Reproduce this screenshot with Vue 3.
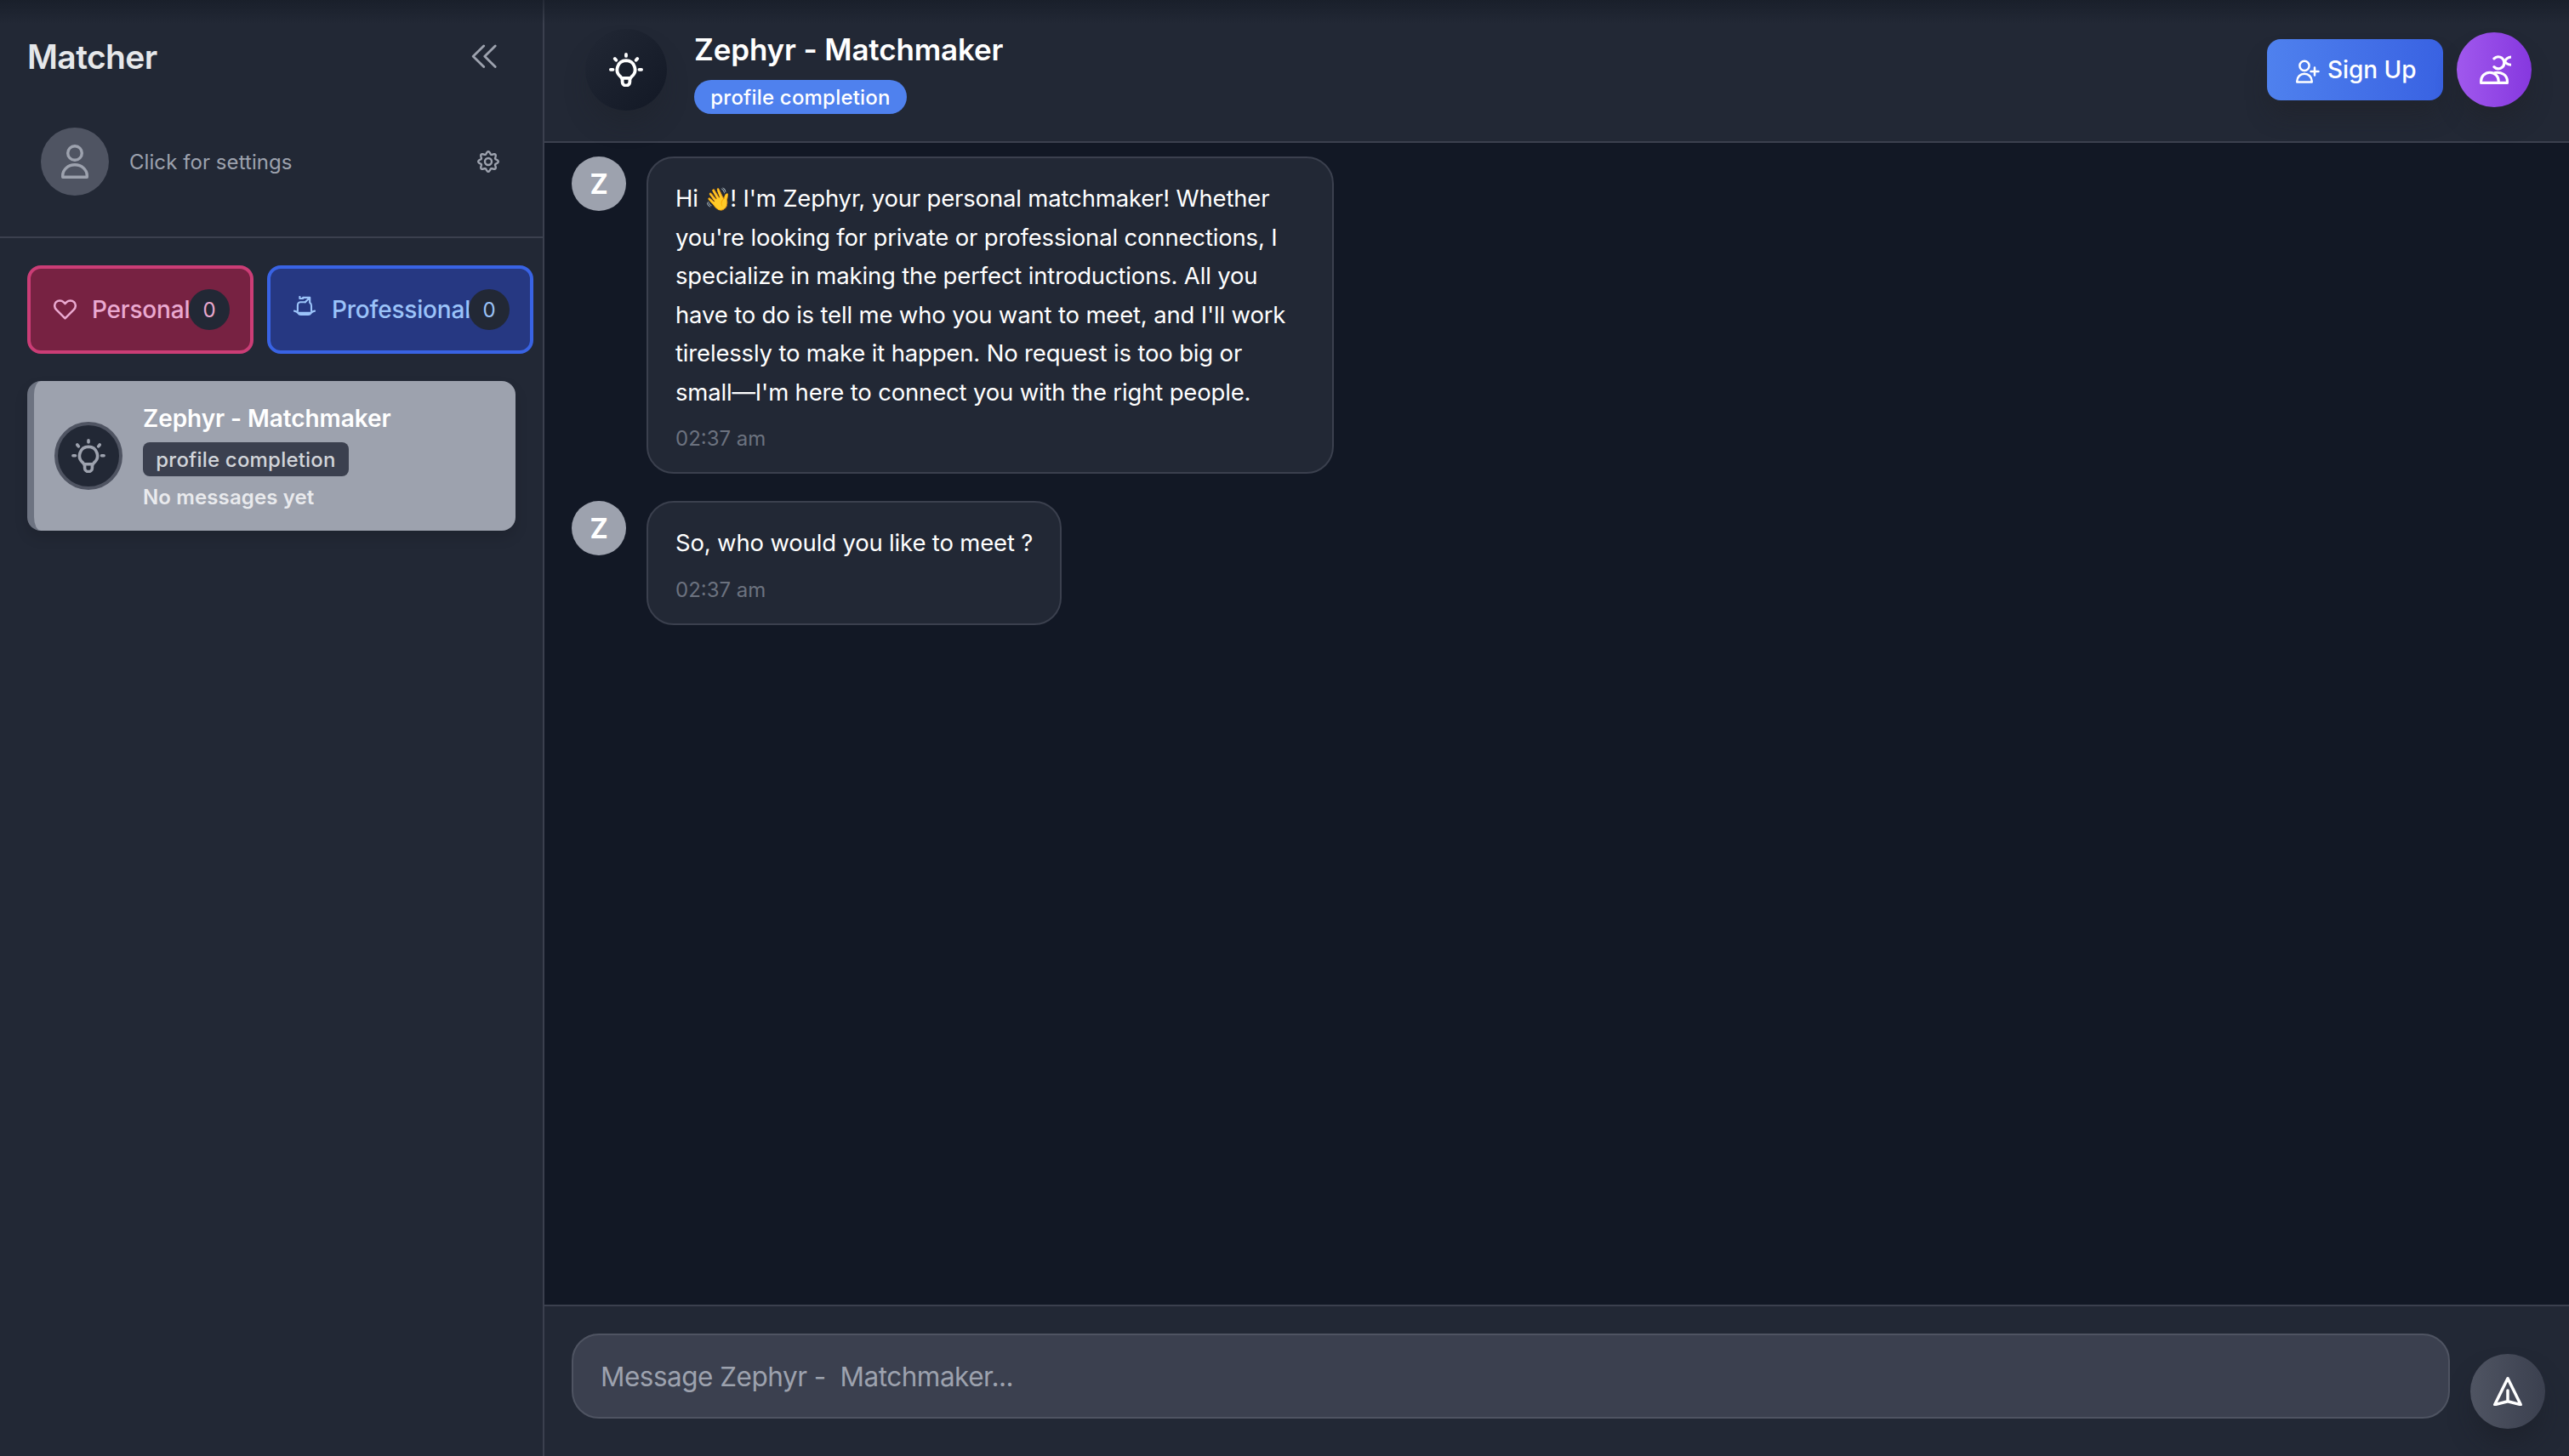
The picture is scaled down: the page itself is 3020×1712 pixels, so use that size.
<template>
  <div class="app">
    <aside class="sidebar">
      <div class="sidebar-top">
        <div class="brand-row">
          <h1 class="brand">Matcher</h1>
          <button class="collapse-btn" aria-label="Collapse">
            <svg width="32" height="28" viewBox="0 0 32 28" class="stroke-icon">
              <path d="M14.7 2 2.2 14.2l12.5 12.2M28.2 2 15.8 14.2l12.4 12.2" stroke-width="2.8" />
            </svg>
          </button>
        </div>
        <div class="account">
          <div class="account-avatar">
            <svg width="32" height="40" viewBox="0 0 32 40" class="stroke-icon">
              <circle cx="16" cy="10" r="8.3" stroke-width="3.4" />
              <path d="M1.7 36.5v1.8h28.6v-1.8a14.3 12.8 0 0 0-28.6 0z" stroke-width="3.4" />
            </svg>
          </div>
          <span class="account-label">Click for settings</span>
          <svg width="28" height="28" viewBox="-14 -14 28 28" class="stroke-icon gear">
            <path :d="gearPath" stroke-width="2.4" />
            <circle r="4" stroke-width="2.4" />
          </svg>
        </div>
      </div>

      <div class="tabs">
        <button v-for="tab in tabs" :key="tab.id" :class="['tab', `tab-${tab.id}`]">
          <span class="tab-icon">
            <svg v-if="tab.id === 'personal'" width="27" height="24" viewBox="0 0 27 24" class="stroke-icon heart">
              <path d="M13.5 22.4 3 11.8a6 6 0 0 1 8.6-8.6l1.9 1.9 1.9-1.9a6 6 0 0 1 8.6 8.6z" stroke-width="2.5" />
            </svg>
            <svg v-else width="26" height="24" viewBox="0 0 26 24" class="stroke-icon case">
              <path d="M4.9 18v-6.500C4.900 8.500 6 7.400 8 7.300h6M19.300 8c1.300.6 1.700 1.600 1.700 3.500V18" stroke-width="2.1" />
              <path d="M1 17.600c3 .3 3.500 1 4.500 2.600.8 1.300 1.500 1.700 3 1.700h9c1.500 0 2.200-.4 3-1.700 1-1.600 1.500-2.300 4.500-2.600M6 19.800h14" stroke-width="2.2" />
              <path d="M7.400 1v2h3.800V1.800h8V7.500M18.800 2.300l-5 5" stroke-width="2.2" />
            </svg>
          </span>
          <span class="tab-label">{{ tab.label }}</span>
          <span class="tab-count">{{ tab.count }}</span>
        </button>
      </div>

      <div class="chat-card">
        <div class="chat-avatar">
          <svg width="40" height="40" viewBox="0 0 40 40" class="stroke-icon">
            <path :d="bulbPath" stroke-width="3.6" />
          </svg>
        </div>
        <div class="chat-info">
          <div class="chat-name">Zephyr - Matchmaker</div>
          <div class="chat-tag">profile completion</div>
          <div class="chat-preview">No messages yet</div>
        </div>
      </div>
    </aside>

    <main class="main">
      <header class="header">
        <div class="header-avatar">
          <svg width="40" height="40" viewBox="0 0 40 40" class="stroke-icon">
            <path :d="bulbPath" stroke-width="3.8" />
          </svg>
        </div>
        <div class="header-info">
          <h2 class="header-title">Zephyr - Matchmaker</h2>
          <div class="header-tag">profile completion</div>
        </div>
        <button class="signup-btn">
          <svg width="28" height="28" viewBox="0 0 28 28" class="stroke-icon">
            <circle cx="10" cy="7.3" r="5.6" stroke-width="2.5" />
            <path d="M1.3 25.4v1h17.4v-1a8.7 8.7 0 0 0-17.4 0z" stroke-width="2.5" />
            <path d="M22 9.5v9M17.5 14h9" stroke-width="2.5" />
          </svg>
          <span>Sign Up</span>
        </button>
        <button class="friends-btn" aria-label="Contacts">
          <svg width="37" height="34" viewBox="0 0 37 34" class="stroke-icon">
            <path d="M1.6 30.5v1.9h20.6v-1.9a10.3 10.3 0 0 0-20.6 0z" stroke-width="3.1" />
            <path d="M18 20.5c7.500-1 14.400 2.500 14.400 10v1.900H22" stroke-width="3.1" />
            <path d="M16.900 3.900a6.800 6.800 0 0 1 11.700 4 6.800 6.800 0 0 1-11.700 5.700" stroke-width="3.1" />
            <path d="M38 1.900c-4.800 0-7 2-8.400 5.100 1.200 2.900 3.600 4.300 8.400 4.300" stroke-width="3.1" />
          </svg>
        </button>
      </header>

      <section class="messages">
        <div v-for="msg in messages" :key="msg.id" class="message">
          <div class="message-avatar">Z</div>
          <div class="bubble">
            <p class="bubble-text">
              <span v-for="(line, i) in msg.lines" :key="i" class="line">
                <template v-if="i === 0 && msg.wave">Hi <span class="emoji">👋</span></template>{{ line }}
              </span>
            </p>
            <span class="bubble-time">{{ msg.time }}</span>
          </div>
        </div>
      </section>

      <footer class="composer">
        <input class="composer-input" type="text" placeholder="Message Zephyr -  Matchmaker..." />
        <button class="send-btn" aria-label="Send">
          <svg width="34" height="34" viewBox="0 0 34 34" class="stroke-icon">
            <path d="M17 1.8 1.8 32.6 17 28.8l15.2 3.8zM17 16v12" stroke-width="3.5" />
          </svg>
        </button>
      </footer>
    </main>
    <div class="top-shade"></div>
  </div>
</template>

<script setup>
const tabs = [
  { id: 'personal', label: 'Personal', count: 0 },
  { id: 'professional', label: 'Professional', count: 0 }
]

const messages = [
  {
    id: 1,
    time: '02:37 am',
    wave: true,
    lines: [
      "! I'm Zephyr, your personal matchmaker! Whether",
      "you're looking for private or professional connections, I",
      'specialize in making the perfect introductions. All you',
      "have to do is tell me who you want to meet, and I'll work",
      'tirelessly to make it happen. No request is too big or',
      "small—I'm here to connect you with the right people."
    ]
  },
  {
    id: 2,
    time: '02:37 am',
    lines: ['So, who would you like to meet ?']
  }
]

const bulbPath = [
  'M20 9.2a10.6 10.6 0 0 1 6.6 18.8c-1.3 1.3-2 2.3-2.2 4v2.2a4.4 4.4 0 0 1-8.8 0V32c-.2-1.7-.9-2.7-2.2-4A10.6 10.6 0 0 1 20 9.2z',
  'M15.4 29.8h9.2M20 1.9v2M1.9 19.8h2.6M35.5 19.8h2.6M6.8 7l1.5 1.8M33.2 7l-1.5 1.8'
].join('')

// eight rounded teeth around the hub
const gearPath = Array.from({ length: 96 }, (_, i) => {
  const a = (i / 96) * Math.PI * 2
  const r = 10.3 + 1.5 * Math.cos(a * 8)
  return `${i ? 'L' : 'M'}${(r * Math.sin(a)).toFixed(2)} ${(-r * Math.cos(a)).toFixed(2)}`
}).join('') + 'z'
</script>

<style>
body {
  margin: 0;
  background: #121825;
}
</style>

<style scoped>
* {
  box-sizing: border-box;
}

.app {
  position: relative;
  display: flex;
  width: 100vw;
  height: 100vh;
  overflow: hidden;
  background: #121825;
  color: #fff;
  font-family: Inter, 'Noto Sans', sans-serif;
  font-size: 28px;
}

button {
  border: none;
  padding: 0;
  color: inherit;
  font: inherit;
  background: none;
  cursor: pointer;
}

.stroke-icon {
  display: block;
  flex-shrink: 0;
  fill: none;
  stroke: currentColor;
  stroke-linecap: round;
  stroke-linejoin: round;
}

.top-shade {
  position: absolute;
  inset: 0 0 auto;
  height: 28px;
  background: linear-gradient(rgba(18, 24, 34, 0.55), rgba(18, 24, 34, 0));
  pointer-events: none;
}

/* sidebar */
.sidebar {
  display: flex;
  flex-direction: column;
  flex-shrink: 0;
  width: 640px;
  background: #222835;
  border-right: 2px solid #3b404e;
}

.sidebar-top {
  height: 280px;
  padding: 32px;
  border-bottom: 2px solid #3b404e;
}

.brand-row {
  display: flex;
  align-items: center;
  justify-content: space-between;
  height: 68px;
  padding-right: 20px;
}

.brand {
  margin: 0;
  font-size: 39px;
  font-weight: 600;
  line-height: 57px;
  letter-spacing: -0.6px;
  color: #e5e7ea;
}

.collapse-btn {
  color: #9da2ae;
}

.account {
  display: flex;
  align-items: center;
  margin-top: 50px;
  padding: 0 18px 0 16px;
  color: #9da2ae;
}

.account-avatar {
  display: flex;
  align-items: center;
  justify-content: center;
  width: 80px;
  height: 80px;
  border-radius: 50%;
  background: #4f5462;
}

.account-label {
  flex: 1;
  margin-left: 24px;
  font-size: 24px;
  letter-spacing: 0.07px;
}

.tabs {
  display: flex;
  gap: 16px;
  padding: 32px 0 0 32px;
}

.tab {
  display: flex;
  align-items: center;
  flex-shrink: 0;
  height: 104px;
  padding: 0 24px;
  border: 4px solid;
  border-radius: 16px;
  font-weight: 450;
}

.tab-personal {
  width: 266px;
  background: #772242;
  border-color: #cb3d76;
  color: #eaa9d0;
}

.tab-professional {
  width: 313px;
  background: #263882;
  border-color: #3963e4;
  color: #9bc3f9;
}

.tab-icon {
  flex-shrink: 0;
  width: 32px;
  padding-left: 3px;
  margin-right: 16px;
}

.case {
  margin-bottom: 9px;
}

.tab-label {
  flex: 1;
  min-width: 0;
  letter-spacing: -0.2px;
  text-align: left;
  white-space: nowrap;
}

.tab-count {
  flex-shrink: 0;
  width: 48px;
  height: 48px;
  border-radius: 50%;
  background: #222835;
  font-size: 24px;
  font-weight: 400;
  line-height: 49px;
  text-align: center;
}

.chat-card {
  display: flex;
  align-items: center;
  width: 574px;
  height: 176px;
  margin: 32px 0 0 32px;
  padding-left: 24px;
  border-left: 8px solid #6d7381;
  border-radius: 16px;
  background: #9da2ae;
  box-shadow: 0 8px 16px rgba(0, 0, 0, 0.12);
}

.chat-avatar {
  display: flex;
  align-items: center;
  justify-content: center;
  width: 80px;
  height: 80px;
  border: 4px solid #4f5462;
  border-radius: 50%;
  background: #222835;
  color: #9da2ae;
}

.chat-info {
  display: flex;
  flex-direction: column;
  align-items: flex-start;
  margin-left: 24px;
}

.chat-name {
  font-weight: 600;
  line-height: 40px;
  letter-spacing: -0.08px;
}

.chat-tag {
  width: 242px;
  height: 40px;
  margin-top: 8px;
  border-radius: 8px;
  background: #3b404f;
  color: #d2d5da;
  font-size: 24px;
  font-weight: 450;
  line-height: 41px;
  letter-spacing: 0.2px;
  text-align: center;
}

.chat-preview {
  margin-top: 8px;
  color: #e9eaed;
  font-size: 24px;
  font-weight: 600;
  line-height: 33px;
  letter-spacing: 0.12px;
}

/* main column */
.main {
  display: flex;
  flex: 1;
  flex-direction: column;
  min-width: 0;
}

.header {
  display: flex;
  align-items: center;
  height: 168px;
  padding: 0 44px 2px 48px;
  background: #222835;
  border-bottom: 2px solid #3b404e;
}

.header-avatar {
  display: flex;
  align-items: center;
  justify-content: center;
  width: 96px;
  height: 96px;
  border-radius: 50%;
  background: linear-gradient(135deg, #222835, #121825);
  box-shadow: 0 20px 30px -6px rgba(28, 32, 38, 0.35);
}

.header-info {
  flex: 1;
  margin-left: 32px;
}

.header-title {
  margin: 0;
  font-size: 35px;
  font-weight: 600;
  line-height: 56px;
  letter-spacing: -0.15px;
}

.header-tag {
  width: 250px;
  height: 40px;
  margin-top: 8px;
  border-radius: 20px;
  background: #4f81ee;
  font-size: 24px;
  font-weight: 450;
  line-height: 41px;
  letter-spacing: 0.2px;
  text-align: center;
}

.signup-btn {
  display: flex;
  align-items: center;
  width: 207px;
  height: 72px;
  padding-left: 34px;
  border-radius: 16px;
  background: linear-gradient(90deg, #4f81ee, #3962e2);
  box-shadow: 0 20px 30px -6px rgba(30, 32, 36, 0.45);
  font-weight: 450;
  letter-spacing: -0.05px;
  white-space: nowrap;
}

.signup-btn svg {
  margin-top: 4px;
}

.signup-btn span {
  margin-left: 9px;
}

.friends-btn {
  display: flex;
  align-items: center;
  justify-content: center;
  width: 88px;
  height: 88px;
  margin-left: 16px;
  border-radius: 50%;
  background: linear-gradient(90deg, #a058ed, #8638df);
  box-shadow: 0 20px 30px -6px rgba(30, 32, 36, 0.45);
}

.friends-btn svg {
  margin-left: 3px;
}

.messages {
  flex: 1;
  min-height: 0;
  padding: 16px 32px;
  overflow: hidden;
}

.message {
  display: flex;
  align-items: flex-start;
  margin-bottom: 32px;
}

.message-avatar {
  width: 64px;
  height: 64px;
  border-radius: 50%;
  background: #9da2ae;
  font-size: 32px;
  font-weight: 700;
  line-height: 66px;
  text-align: center;
}

.bubble {
  max-width: 808px;
  margin-left: 24px;
  padding: 25px 32px 23px;
  border: 2px solid #3b404e;
  border-radius: 32px;
  background: #222835;
}

.message:first-child .bubble {
  width: 808px;
}

.bubble-text {
  margin: 0;
  font-size: 27.5px;
  line-height: 45.5px;
  letter-spacing: -0.17px;
}

.line {
  display: block;
  white-space: nowrap;
}

.emoji {
  margin-right: -2px;
  font-size: 26px;
  line-height: 1;
}

.bubble-time {
  display: block;
  margin-top: 16px;
  color: #6c727f;
  font-size: 24px;
  line-height: 32px;
}

.composer {
  display: flex;
  height: 178px;
  padding: 32px 28px 0 32px;
  background: #222835;
  border-top: 2px solid #3b404e;
}

.composer-input {
  flex: 1;
  height: 100px;
  padding: 0 32px;
  border: 2px solid #4f5462;
  border-radius: 32px;
  background: #3b404f;
  color: #fff;
  font-family: inherit;
  font-size: 31.5px;
  letter-spacing: -0.5px;
  outline: none;
}

.composer-input::placeholder {
  color: #9da2ae;
  opacity: 1;
}

.send-btn {
  display: flex;
  align-items: center;
  justify-content: center;
  width: 88px;
  height: 88px;
  margin: 24px 0 0 24px;
  border-radius: 50%;
  background: linear-gradient(90deg, #4f5462, #3b404f);
  box-shadow: 0 20px 30px -6px rgba(26, 28, 36, 0.5);
}
</style>
